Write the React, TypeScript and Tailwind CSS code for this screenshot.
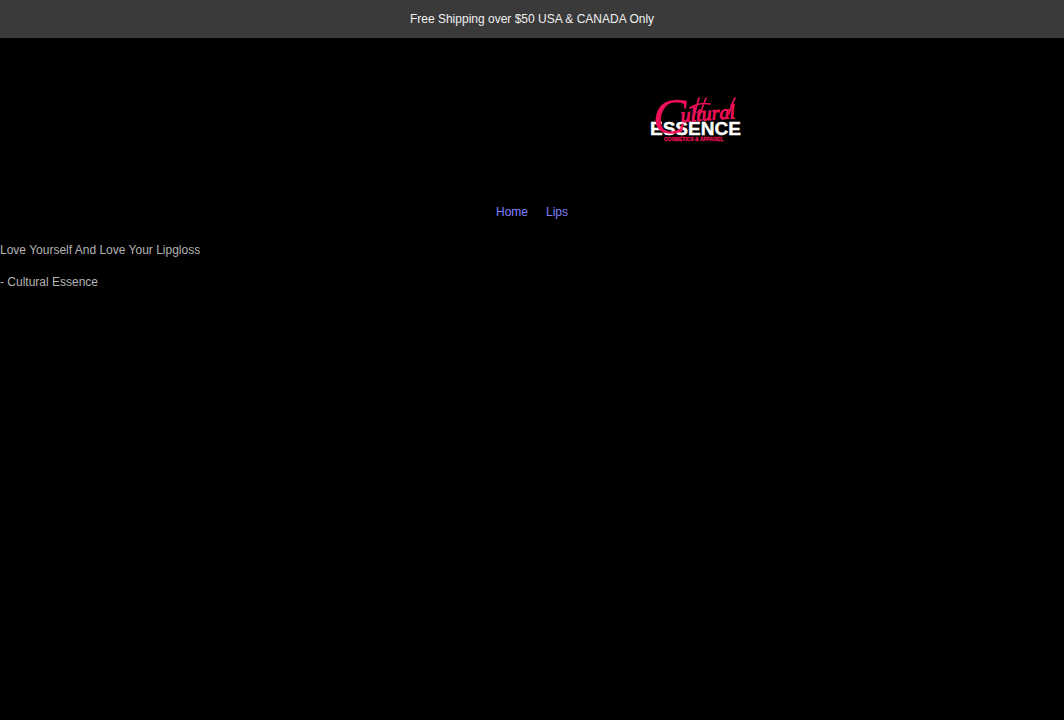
const navLinks = [
  { label: "Home", href: "#home" },
  { label: "Lips", href: "#lips" },
];

function Logo() {
  return (
    <svg
      width="92"
      height="52"
      viewBox="0 0 92 52"
      role="img"
      aria-label="Cultural Essence"
      className="overflow-visible"
    >
      <text
        x="0"
        y="41"
        fill="#ffffff"
        stroke="#ffffff"
        strokeWidth="0.4"
        fontFamily="'Liberation Sans', sans-serif"
        fontWeight="700"
        fontSize="19"
      >
        ESSENCE
      </text>
      <g
        fill="#f01058"
        stroke="#f01058"
        strokeWidth="0.3"
        fontFamily="'Liberation Serif', serif"
        fontStyle="italic"
      >
        <text x="3" y="39" fontSize="50">
          C
        </text>
        <text x="31" y="28" fontSize="20" strokeWidth="0.9" transform="rotate(-4 31 28)">
          ultural
        </text>
      </g>
      {/* brush flourishes over the script line */}
      <path
        d="M43 25 L49 4 M49 23 L56 4 M40 14 Q49 8 60 10 M79 20 Q82 9 85 4"
        fill="none"
        stroke="#f01058"
        strokeWidth="1.6"
        strokeLinecap="round"
      />
      <text
        x="14"
        y="47"
        fill="#e01050"
        stroke="#e01050"
        strokeWidth="0.3"
        fontFamily="'Liberation Sans', sans-serif"
        fontWeight="700"
        fontSize="5"
      >
        COSMETICS &amp; APPAREL
      </text>
    </svg>
  );
}

export default function App() {
  return (
    <div className="min-h-screen bg-black font-['Liberation_Sans',Arial,sans-serif] text-xs text-[#b4b4b4]">
      <div className="bg-[#3a3a3a] px-4 py-2 text-center leading-[22px] text-[#f0f0f0]">
        Free Shipping over $50 USA &amp; CANADA Only
      </div>

      <header>
        <div className="grid grid-cols-[11fr_7fr] pt-14">
          <a href="#home" className="col-start-2">
            <Logo />
          </a>
        </div>
        <nav className="flex justify-center gap-[18px] pt-14 leading-5 text-[#8080ff]">
          {navLinks.map((link) => (
            <a key={link.label} href={link.href}>
              {link.label}
            </a>
          ))}
        </nav>
      </header>

      <main className="flex flex-col gap-4 pt-5 leading-4">
        <p>Love Yourself And Love Your Lipgloss</p>
        <p>- Cultural Essence</p>
      </main>
    </div>
  );
}
